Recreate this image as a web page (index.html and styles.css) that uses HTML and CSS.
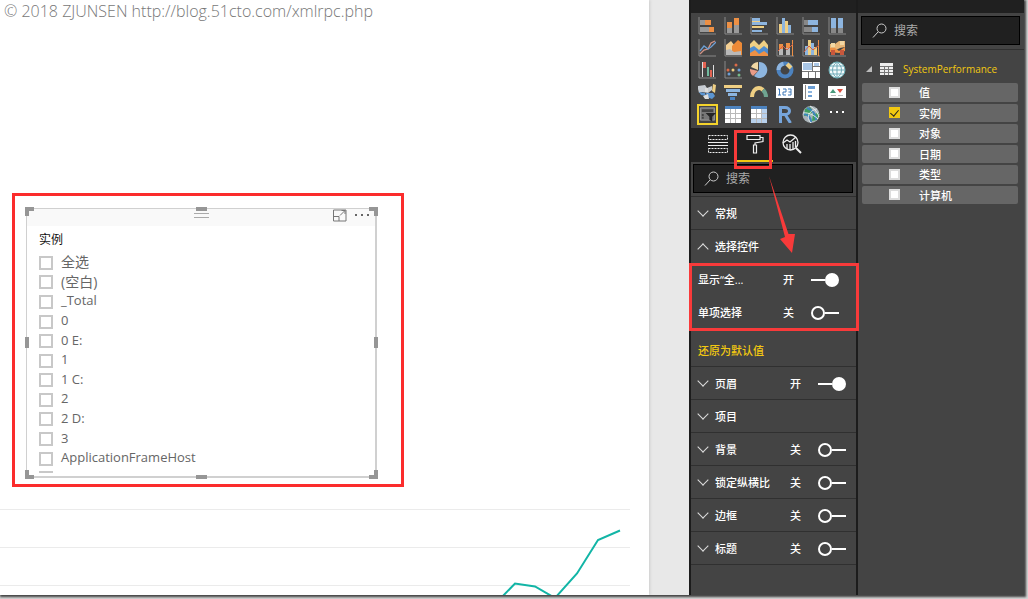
FILE: index.html
```html
<!DOCTYPE html>
<html lang="zh-CN">
<head>
<meta charset="utf-8">
<title>SystemPerformance</title>
<link rel="stylesheet" href="styles.css">
</head>
<body>
<div class="app">
  <main class="workspace">
    <div class="page">
      <p class="credit">© 2018 ZJUNSEN http://blog.51cto.com/xmlrpc.php</p>
      <section class="highlight">
        <div class="slicer">
          <i class="handle corner tl"></i><i class="handle corner tr"></i><i class="handle corner bl"></i><i class="handle corner br"></i>
          <i class="handle bar top"></i><i class="handle bar bottom"></i><i class="handle side left"></i><i class="handle side right"></i>
          <header class="slicer-head">
            <i class="grip"></i>
            <div class="slicer-tools">
              <button class="plain" aria-label="焦点模式"><svg width="14" height="13" viewBox="0 0 14 13" fill="none" stroke="#777"><path d="M.5 1h12.500v11H.5zM.5 7.500h5.500V12M7 6.500l5-5M8.500 1.500H12V5"/></svg></button>
              <button class="plain" aria-label="更多选项"><svg width="15" height="13" viewBox="0 0 15 13" fill="#666"><path d="M0 5h2v2H0zM6 5h2v2H6zM12 5h2v2h-2z"/></svg></button>
            </div>
          </header>
          <h2 class="slicer-title">实例</h2>
          <div class="list-window">
            <div class="list">
              <label class="wide"><input type="checkbox" class="box"><span>全选</span></label>
              <label class="wide"><input type="checkbox" class="box"><span>(空白)</span></label>
              <label><input type="checkbox" class="box"><span>_Total</span></label>
              <label><input type="checkbox" class="box"><span>0</span></label>
              <label><input type="checkbox" class="box"><span>0 E:</span></label>
              <label><input type="checkbox" class="box"><span>1</span></label>
              <label><input type="checkbox" class="box"><span>1 C:</span></label>
              <label><input type="checkbox" class="box"><span>2</span></label>
              <label><input type="checkbox" class="box"><span>2 D:</span></label>
              <label><input type="checkbox" class="box"><span>3</span></label>
              <label><input type="checkbox" class="box"><span>ApplicationFrameHost</span></label>
              <div><i class="box"></i></div>
            </div>
          </div>
        </div>
      </section>
      <svg class="chart" width="630" height="97" viewBox="0 0 630 97" fill="none">
        <path d="M0 10.500h630M0 48.500h630M0 86.500h630" stroke="#ebebeb"/>
        <path d="M499 101l16-16.500 20 3 20 11.500 22-24.500 21-33.500 22-9.500" stroke="#12b5a6" stroke-width="2"/>
      </svg>
    </div>
  </main>

  <aside class="panel format">
    <div class="cap"></div>
    <div class="visuals">
      <button class="plain"><svg viewBox="0 0 18 18"><path d="M1 0v17h17" class="ax"/><path fill="#9a9a9a" d="M2 3h5v5H2zM2 10h9v5H2z"/><path fill="#ed9045" d="M7 3h6v5H7zM11 10h5v5h-5z"/></svg></button>
      <button class="plain"><svg viewBox="0 0 18 18"><path d="M1 0v17h17" class="ax"/><path fill="#9a9a9a" d="M3 11h5v5H3zM10 8h5v8h-5z"/><path fill="#ed9045" d="M3 5h5v6H3zM10 1h5v7h-5z"/></svg></button>
      <button class="plain"><svg viewBox="0 0 18 18"><path d="M1 0v17h17" class="ax"/><path fill="#8db5df" d="M2 1h8v3H2zM2 5h15v3H2zM2 13h10v2H2z"/><path fill="#efcf83" d="M2 9h12v2H2zM2 4h8v1H2z"/></svg></button>
      <button class="plain"><svg viewBox="0 0 18 18"><path d="M1 0v17h17" class="ax"/><path fill="#efcf83" d="M3 7h3v9H3zM9 4h3v12H9z"/><path fill="#8db5df" d="M6 1h3v15H6zM12 8h3v8h-3z"/></svg></button>
      <button class="plain"><svg viewBox="0 0 18 18"><path d="M1 0v17h17" class="ax"/><path fill="#888" d="M2 3h4v5H2zM2 10h8v5H2z"/><path fill="#8db5df" d="M6 3h10v5H6zM10 10h6v5h-6z"/></svg></button>
      <button class="plain"><svg viewBox="0 0 18 18"><path d="M1 0v17h17" class="ax"/><path fill="#888" d="M3 11h5v5H3zM10 11h5v5h-5z"/><path fill="#8db5df" d="M3 1h5v10H3zM10 1h5v10h-5z"/></svg></button>

      <button class="plain"><svg viewBox="0 0 18 18"><path d="M1 0v17h17" class="ax"/><path fill="none" stroke="#d39384" stroke-width="1.300" d="M2 15l4-4 4-1 3-6 4-2"/><path fill="none" stroke="#6d9fd4" stroke-width="1.300" d="M2 12l4-5 4 3 3-2 5-5"/></svg></button>
      <button class="plain"><svg viewBox="0 0 18 18"><path d="M1 0v17h17" class="ax"/><path fill="#f3cf93" d="M2 16V6l5-4 4 5 6-4v13z"/><path fill="#ed8a36" d="M8 7l6-6 4 3v12H8z"/><path fill="#b9b9b9" d="M2 11l4-1 4 3 7-1v4H2z"/></svg></button>
      <button class="plain"><svg viewBox="0 0 18 18"><path fill="#efcf83" d="M0 16V5l4-4 5 5 5-5 4 5v10z"/><path fill="#4d8cd0" d="M0 16V9l4-2 5 4 5-4 4 3v6z"/><path fill="#ed9045" d="M0 17v-3l5-3 4 4 5-3 4 3v2z"/></svg></button>
      <button class="plain"><svg viewBox="0 0 18 18"><path d="M1 0v17h17" class="ax"/><path fill="#b9b9b9" d="M3 10h4v6H3zM10 9h4v7h-4z"/><path fill="#ed9045" d="M3 5h4v5H3zM10 4h4v5h-4zM16 1h1v16h-1z"/><path fill="none" stroke="#d95f42" d="M2 12l5-5 4 4 6-6"/></svg></button>
      <button class="plain"><svg viewBox="0 0 18 18"><path d="M1 0v17h17" class="ax"/><path fill="#8db5df" d="M3 7h3v9H3zM9 4h3v12H9z"/><path fill="#efcf83" d="M6 1h3v15H6zM12 8h3v8h-3z"/><path fill="#ed9045" d="M16 1h1v16h-1z"/><path fill="none" stroke="#d95f42" d="M2 13l5-6 4 4 6-5"/></svg></button>
      <button class="plain"><svg viewBox="0 0 18 18"><path d="M1 0v17h17" class="ax"/><path fill="#e9b777" d="M2 5h5l4-3h6v6l-5 1-4 2H2z"/><path fill="#ed9045" d="M2 9h5l4 3 6-4v4l-6 2-9-1z"/><path fill="#c8573c" d="M3 11h4v5H3zM12 11h4v5h-4z"/><path fill="#f1d7a4" d="M3 4h4v4H3zM12 2h4v4h-4z"/></svg></button>

      <button class="plain"><svg viewBox="0 0 18 18"><path d="M1 0v17h17" class="ax"/><path fill="#ddd" d="M4 1h1v15H4zM15 4h1v12h-1z"/><path fill="#e46452" d="M5 1h3v6H5zM12 9h2v7h-2z"/><path fill="#71b99e" d="M9 6h2v9H9z"/></svg></button>
      <button class="plain"><svg viewBox="0 0 18 18"><path d="M1 0v17h17" class="ax"/><circle cx="4" cy="9" r="1.500" fill="#dc6b48"/><circle cx="12" cy="4" r="1.500" fill="#dc6b48"/><circle cx="5" cy="13" r="1.500" fill="#6d9fd4"/><circle cx="15" cy="9" r="1.500" fill="#6d9fd4"/><circle cx="15" cy="14" r="1.500" fill="#76b88a"/><circle cx="9" cy="9" r="1.500" fill="#efcf83"/></svg></button>
      <button class="plain"><svg viewBox="0 0 18 18"><path fill="#8db5df" d="M9 1a8 8 0 1 1-5 14l5-6z"/><path fill="#f1d7a4" d="M8 1v8L1 6a8 8 0 0 1 7-5z"/><path fill="#e99c88" d="M0 8l8 2-5 5a8 8 0 0 1-3-7z"/></svg></button>
      <button class="plain"><svg viewBox="0 0 18 18"><circle cx="9" cy="9" r="6.500" fill="none" stroke="#4d83bf" stroke-width="4"/><path fill="none" stroke="#8db5df" stroke-width="4" d="M2.500 9a6.500 6.500 0 0 1 5-6.300"/><path fill="none" stroke="#efcf83" stroke-width="4" d="M11 3l4 4"/></svg></button>
      <button class="plain"><svg viewBox="0 0 18 18"><path fill="#fff" d="M0 1h18v16H0z"/><path fill="#a9c6e6" d="M1 2h9v7H1zM12 2h5v3h-5z"/><path stroke="#777" d="M0 10.500h18M10.500 1v9M6.500 11v6M13.500 11v6M11 5.500h7"/></svg></button>
      <button class="plain"><svg viewBox="0 0 18 18"><circle cx="9" cy="9" r="8" fill="#f4fafb" stroke="#6caeb5"/><path fill="none" stroke="#70abb8" d="M9 1v16M1 9h16M2 5h14M2 13h14M9 1C3 5 3 13 9 17M9 1c6 4 6 12 0 16"/></svg></button>

      <button class="plain"><svg viewBox="0 0 18 18"><path fill="#c7ccd2" d="M0 3l7-1 2 3 5-2v4l-4 3-6-1-3 1-1-4z"/><path fill="#efcf83" d="M15 1l3 1-1 8-3-2z"/><path fill="#5b95d2" d="M1 9l6 1 1 3-5-1zM8 10h7l2 3-3 3-5-2z"/><path fill="#ddd" d="M5 13l5-2 1 5H7zM7 5h3v4H7z"/></svg></button>
      <button class="plain"><svg viewBox="0 0 18 18"><path fill="#efcf83" d="M0 2h18v3H0z"/><path fill="#8db5df" d="M2 6h14v3H2zM4 10h9v3H4z"/><path fill="#4d83bf" d="M6 14h5v3H6z"/></svg></button>
      <button class="plain"><svg viewBox="0 0 18 18" fill="none" stroke-width="4"><path stroke="#efcf83" d="M2 14c0-5 3-9 7-9 2 0 3 1 4 2"/><path stroke="#6fa491" d="M13 7c2 2 3 4 3 7"/></svg></button>
      <button class="plain"><svg viewBox="0 0 18 18"><path fill="#fff" d="M0 3h18v12H0z"/><path fill="none" stroke="#3f78b8" d="M2 6h1.500v6M2 12h3M7 6h3v3H7v3h3M12 6h3v6h-3M12.500 9H15"/></svg></button>
      <button class="plain"><svg viewBox="0 0 18 18"><path fill="#fff" d="M1 1h16v16H1z"/><path fill="#888" d="M3 2h1v14H3z"/><path fill="#6d9fd4" d="M6 3h7v3H6zM6 12h4v2H6z"/><path fill="#8db5df" d="M6 8h4v2H6z"/></svg></button>
      <button class="plain"><svg viewBox="0 0 18 18"><path fill="#fff" d="M0 3h18v12H0z"/><path fill="#4a9b7d" d="M2 10l3-4 3 4z"/><path fill="#dc4d3d" d="M9 6h6l-3 4z"/><path fill="#bbb" d="M3 12h5v1H3zM10 12h5v1h-5z"/></svg></button>

      <button class="plain selected"><svg viewBox="0 0 18 18"><path fill="#777" stroke="#999" d="M1.500 2.500h15v13h-15z"/><path fill="#444" d="M3 4h12v3H3zM3 9h2v2H3zM3 12h2v2H3z"/><path fill="#252525" d="M7 8h11l-4 4v5l-3-2v-3z"/></svg></button>
      <button class="plain"><svg viewBox="0 0 18 18"><path fill="#fff" d="M1 1h16v17H1z"/><path fill="#4d83bf" d="M1 1h16v3H1z"/><path stroke="#b9b9b9" d="M6.500 4v14M11.500 4v14M1 8.500h16M1 13.500h16"/></svg></button>
      <button class="plain"><svg viewBox="0 0 18 18"><path fill="#fff" d="M1 1h16v17H1z"/><path fill="#4d83bf" d="M1 1h16v3H1z"/><path fill="#b7d0ec" d="M12 4h5v14h-5zM1 14h16v4H1z"/><path stroke="#b9b9b9" d="M6.500 4v14M11.500 4v14M1 8.500h16M1 13.500h16"/></svg></button>
      <button class="plain"><svg viewBox="0 0 18 18" fill="none" stroke="#76a5dc" stroke-width="3"><path d="M4.500 18V2.500H9c6 0 6 7 0 7H5M9.500 10l5 8"/></svg></button>
      <button class="plain"><svg viewBox="0 0 18 18"><circle cx="9" cy="9.500" r="8.500" fill="#a9b3b8"/><path fill="#3f9e5f" d="M3 4l5-2 3 4-3 4-6 1zM11 9l6-1-2 7-5 1z"/><path fill="none" stroke="#3d86bd" stroke-width="2" d="M5 3c6 2 9 7 9 12M2 9c4 0 7 4 7 8"/><path fill="none" stroke="#e4ecee" d="M1 8c6-1 12 3 15 6M8 1c5 3 8 7 9 11M9 18C3 12 8 5 15 4"/></svg></button>
      <button class="plain"><svg viewBox="0 0 18 18" fill="#fff"><path d="M2 6h2v2H2zM8 6h2v2H8zM14 6h2v2h-2z"/></svg></button>
    </div>
    <nav class="tabs">
      <button class="plain"><svg width="20" height="20" viewBox="0 0 20 20" fill="none" stroke="#eee"><path stroke-dasharray="2 1" d="M.5 1.500h19v4H.5z"/><path d="M0 8.500h20M0 11.500h20"/><path stroke-dasharray="2 1" d="M.5 14.500h19v4H.5z"/></svg></button>
      <button class="plain current"><svg width="20" height="20" viewBox="0 0 20 20" fill="none" stroke="#eee" stroke-width="1.200"><path d="M2 1.500h13v4H2zM15 3.500h3v4l-8 1.500v2M8.500 11h3v8h-3z"/></svg></button>
      <button class="plain"><svg width="20" height="20" viewBox="0 0 20 20" fill="none" stroke="#eee" stroke-width="1.300"><circle cx="8.500" cy="8.500" r="7.500"/><path stroke-width="2" d="M14 14l5 5"/><path d="M1 9l4-3 3 2 6-5M5 15v-5M8 16v-6M11 15V8M13.500 13V7"/></svg></button>
    </nav>
    <div class="search"><svg width="15" height="15" viewBox="0 0 15 15" fill="none" stroke="#ccc"><circle cx="9.500" cy="5.500" r="4.500"/><path d="M6 9l-5 5.500"/></svg><input type="text" placeholder="搜索" aria-label="搜索"></div>
    <div class="rows">
      <div class="row"><button class="plain head"><i class="chev"></i>常规</button></div>
      <div class="row open"><button class="plain head"><i class="chev"></i>选择控件</button></div>
      <label class="row sub"><span class="name">显示“全...</span><span>开</span><input type="checkbox" class="switch" checked></label>
      <label class="row sub"><span class="name">单项选择</span><span>关</span><input type="checkbox" class="switch"></label>
      <div class="row reset"><button class="plain">还原为默认值</button></div>
      <div class="row"><button class="plain head"><i class="chev"></i>页眉</button><label><span>开</span><input type="checkbox" class="switch" checked></label></div>
      <div class="row"><button class="plain head"><i class="chev"></i>项目</button></div>
      <div class="row"><button class="plain head"><i class="chev"></i>背景</button><label><span>关</span><input type="checkbox" class="switch"></label></div>
      <div class="row"><button class="plain head"><i class="chev"></i>锁定纵横比</button><label><span>关</span><input type="checkbox" class="switch"></label></div>
      <div class="row"><button class="plain head"><i class="chev"></i>边框</button><label><span>关</span><input type="checkbox" class="switch"></label></div>
      <div class="row"><button class="plain head"><i class="chev"></i>标题</button><label><span>关</span><input type="checkbox" class="switch"></label></div>
    </div>
    <i class="mark mark-tab"></i>
    <i class="mark mark-options"></i>
    <svg class="arrow" width="28" height="78" viewBox="0 0 28 78"><path fill="#f83a3a" d="M1 0l19.500 58 6.500 0-3 19-12-14 5-2z"/></svg>
  </aside>

  <aside class="panel fields">
    <div class="cap"></div>
    <div class="search"><svg width="15" height="15" viewBox="0 0 15 15" fill="none" stroke="#ccc"><circle cx="9.500" cy="5.500" r="4.500"/><path d="M6 9l-5 5.500"/></svg><input type="text" placeholder="搜索" aria-label="搜索"></div>
    <button class="plain table-name">
      <svg width="6" height="6" viewBox="0 0 6 6"><path fill="#bbb" d="M6 0v6H0z"/></svg>
      <svg width="13" height="12" viewBox="0 0 13 12"><path fill="#eee" d="M0 0h13v12H0z"/><path stroke="#777" d="M0 3.500h13M0 6.500h13M0 9.500h13M4.500 3v9M8.500 3v9"/></svg>
      <span>SystemPerformance</span>
    </button>
    <div class="field-list">
      <label><input type="checkbox" class="tick"><span>值</span></label>
      <label><input type="checkbox" class="tick" checked><span>实例</span></label>
      <label><input type="checkbox" class="tick"><span>对象</span></label>
      <label><input type="checkbox" class="tick"><span>日期</span></label>
      <label><input type="checkbox" class="tick"><span>类型</span></label>
      <label><input type="checkbox" class="tick"><span>计算机</span></label>
    </div>
  </aside>
</div>
</body>
</html>
```
FILE: styles.css
```css
*, *::before { box-sizing: border-box; }
body {
  margin: 0;
  padding: 0 4px 4px 0;
  background: #d4d4d4;
  font-family: "Open Sans", "Noto Sans CJK SC", sans-serif;
  font-size: 11px;
}
i { display: block; }
.plain {
  display: flex;
  align-items: center;
  border: 0;
  padding: 0;
  background: none;
  color: inherit;
  font: inherit;
}
.app {
  display: grid;
  grid-template-columns: minmax(0, 1fr) 167px 168px;
  height: calc(100vh - 4px);
  box-shadow: 1px 1px 2px 1px #444;
}

/* Report canvas */
.workspace {
  padding-right: 40px;
  background: #e8e8e8;
  overflow: hidden;
}
.page {
  height: 100%;
  background: #fff;
  box-shadow: 1px 0 3px #ccc;
  overflow: hidden;
}
.credit {
  margin: 0 0 170px;
  padding-left: 4px;
  color: #777;
  font-size: 16px;
  font-weight: 300;
  line-height: 23px;
  white-space: nowrap;
}
.highlight {
  width: 392px;
  margin-left: 12px;
  border: 3px solid #fb2c2c;
  padding: 12px 24px 6px 11px;
}
.slicer {
  position: relative;
  border: 1px solid #d0d0d0;
  border-right-width: 2px;
  border-bottom-width: 2px;
}
.handle { position: absolute; background: #969696; }
.corner { width: 9px; height: 9px; border: 0 solid #969696; background: none; }
.tl { left: -2px; top: -2px; border-width: 4px 0 0 4px; }
.tr { right: -3px; top: -2px; border-width: 4px 4px 0 0; }
.bl { left: -2px; bottom: -3px; border-width: 0 0 4px 4px; }
.br { right: -3px; bottom: -3px; border-width: 0 4px 4px 0; }
.bar { left: 50%; width: 11px; height: 4px; margin-left: -5px; }
.top { top: -2px; }
.bottom { bottom: -3px; }
.side { top: 50%; width: 4px; height: 11px; margin-top: -6px; }
.left { left: -2px; }
.right { right: -3px; }
.slicer-head {
  display: grid;
  grid-template-columns: 1fr 15px 1fr;
  align-items: start;
  height: 17px;
  background: #f9f9f9;
}
.grip {
  grid-column: 2;
  height: 5px;
  margin-top: 4px;
  border: solid #aaa;
  border-width: 1px 0;
}
.slicer-tools {
  display: flex;
  justify-content: flex-end;
  gap: 8px;
  padding: 0 5px 0 0;
}
.slicer-title {
  margin: 5px 0 3px 12px;
  color: #111;
  font-size: 12px;
  font-weight: 400;
  line-height: 18px;
}
.list-window {
  height: 221px;
  margin-bottom: 3px;
  padding-left: 12px;
  overflow: hidden;
}
.list {
  display: grid;
  grid-auto-rows: 1fr;
  height: 235px;
  color: #666;
  font-size: 13px;
  line-height: 19px;
}
.list > * { display: flex; align-items: center; gap: 8px; }
.list .wide { font-size: 14px; }
.box {
  flex: none;
  width: 14px;
  height: 14px;
  margin: 2px 0 0;
  border: 2px solid #c8c8c8;
  background: #fff;
  appearance: none;
}
.chart { display: block; margin-top: 12px; }

/* Side panels */
.panel {
  position: relative;
  min-width: 0;
  border-left: 2px solid #1c1c1c;
  background: #444;
  color: #fff;
}
.format { z-index: 1; }
.cap { height: 13px; background: #202020; }
.visuals {
  display: grid;
  grid-template-columns: repeat(6, 26px);
  grid-auto-rows: 22px;
  padding: 2px 0 3px 3px;
}
.visuals button { justify-content: center; }
.visuals svg { width: 18px; height: 18px; }
.visuals .selected {
  place-self: center;
  width: 21px;
  height: 21px;
  border: 2px solid #f4d32c;
}
.ax { fill: none; stroke: #888; }
.tabs {
  display: flex;
  height: 34px;
  padding-left: 8px;
  background: #202020;
}
.tabs button {
  justify-content: center;
  width: 37px;
  border-bottom: 2px solid transparent;
}
.tabs .current { border-bottom-color: #f2c811; }
.search {
  display: flex;
  align-items: center;
  gap: 7px;
  height: 29px;
  margin: 2px 3px 3px 2px;
  border: 1px solid #000;
  padding-left: 10px;
  background: #202020;
}
.search input {
  flex: 1;
  min-width: 0;
  border: 0;
  padding: 0;
  background: none;
  color: #fff;
  font: 12px "Open Sans", "Noto Sans CJK SC", sans-serif;
}
.search input::placeholder { color: #aaa; }
.rows { border-top: 1px solid #303030; }
.row {
  display: flex;
  align-items: center;
  height: 33px;
  border-bottom: 1px solid #303030;
  padding: 0 10px 0 7px;
  font-weight: 500;
}
.row label { display: flex; align-items: center; }
.head { flex: 1; gap: 6px; white-space: nowrap; }
.chev { width: 11px; height: 8px; padding-left: 1px; }
.chev::before {
  content: "";
  display: block;
  width: 8px;
  height: 8px;
  border: solid #ddd;
  border-width: 0 1px 1px 0;
  transform: translateY(-2px) rotate(45deg);
}
.open .chev::before { transform: translateY(3px) rotate(225deg); }
.row.open, .row.sub { border-bottom-color: transparent; }
.sub { padding-right: 17px; }
.name { flex: 1; }
.reset { height: 38px; padding-top: 4px; color: #f2c811; }
.switch {
  position: relative;
  width: 28px;
  height: 14px;
  margin: 2px 0 0 17px;
  background: linear-gradient(#fff, #fff) right 6px / 14px 2px no-repeat;
  appearance: none;
}
.switch::before {
  content: "";
  position: absolute;
  left: 0;
  width: 14px;
  height: 14px;
  border: 2px solid #fff;
  border-radius: 50%;
}
.switch:checked { background-position: left 6px; }
.switch:checked::before { left: 14px; background: #fff; }

/* Callouts laid over the panel */
.mark { position: absolute; border: 3px solid #f83a3a; pointer-events: none; }
.mark-tab { left: 43px; top: 130px; width: 38px; height: 39px; }
.mark-options { left: -2px; right: -3px; top: 263px; height: 68px; }
.arrow { position: absolute; left: 77px; top: 176px; }

/* Field list */
.fields .search { margin: 3px 4px 4px 3px; }
.table-name {
  width: 100%;
  height: 34px;
  border-top: 1px solid #303030;
  padding: 5px 0 0 8px;
  color: #f2c811;
  font-size: 10px;
  font-weight: 500;
}
.table-name svg + svg { margin-left: 8px; }
.table-name span { margin-left: 10px; }
.field-list {
  display: grid;
  grid-auto-rows: 1fr;
  gap: 2px;
  height: 121px;
  padding: 0 6px 0 4px;
}
.field-list label {
  display: flex;
  align-items: center;
  gap: 19px;
  border-radius: 2px;
  padding-left: 27px;
  background: #666;
  font-weight: 500;
}
.tick {
  width: 11px;
  height: 11px;
  margin: 0;
  border: 2px solid #ddd;
  background: #fff;
  appearance: none;
}
.tick:checked { border-color: #f2c811; background: #f2c811; }
.tick:checked::before {
  content: "";
  display: block;
  width: 5px;
  height: 8px;
  margin-left: 1px;
  border: solid #222;
  border-width: 0 1px 1px 0;
  transform: translateY(-1px) rotate(40deg);
}
```
